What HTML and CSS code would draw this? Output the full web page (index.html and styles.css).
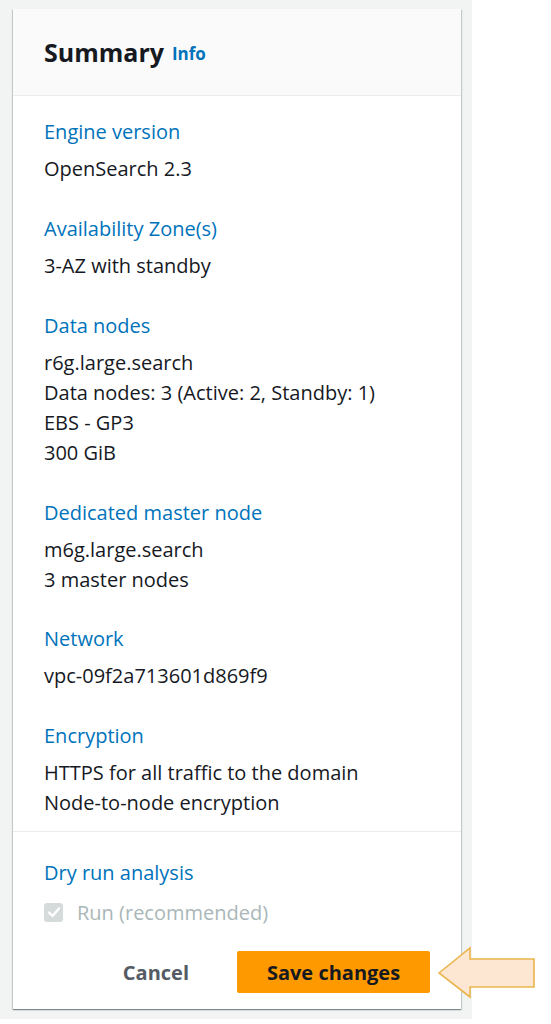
FILE: index.html
```html
<!DOCTYPE html>
<html lang="en">
<head>
<meta charset="utf-8">
<title>Summary</title>
<link rel="stylesheet" href="styles.css">
</head>
<body>
<div class="canvas">
  <div class="card">
    <div class="card-header">
      <h2 class="title">Summary</h2>
      <a class="info" href="#">Info</a>
    </div>
    <div class="card-body">
      <section class="item">
        <div class="label">Engine version</div>
        <div class="value">OpenSearch 2.3</div>
      </section>
      <section class="item">
        <div class="label">Availability Zone(s)</div>
        <div class="value">3-AZ with standby</div>
      </section>
      <section class="item">
        <div class="label">Data nodes</div>
        <div class="value">r6g.large.search<br>Data nodes: 3 (Active: 2, Standby: 1)<br>EBS - GP3<br>300 GiB</div>
      </section>
      <section class="item">
        <div class="label">Dedicated master node</div>
        <div class="value">m6g.large.search<br>3 master nodes</div>
      </section>
      <section class="item">
        <div class="label">Network</div>
        <div class="value">vpc-09f2a713601d869f9</div>
      </section>
      <section class="item">
        <div class="label">Encryption</div>
        <div class="value">HTTPS for all traffic to the domain<br>Node-to-node encryption</div>
      </section>
    </div>
    <div class="card-footer">
      <div class="label">Dry run analysis</div>
      <label class="check">
        <span class="box"><svg viewBox="0 0 18 18" width="18" height="18"><path d="M4 9.5 L7.5 13 L14 5.5" fill="none" stroke="#fff" stroke-width="2.4" stroke-linecap="round" stroke-linejoin="round"/></svg></span>
        <span class="check-text">Run (recommended)</span>
      </label>
      <div class="actions">
        <button class="btn-link">Cancel</button>
        <button class="btn-primary">Save changes</button>
      </div>
    </div>
    <svg class="arrow" width="100" height="54" viewBox="0 0 100 54">
      <polygon points="2,27 33,2 33,13 97,13 97,41 33,41 33,51" fill="#fde7d3" stroke="#eab54c" stroke-width="1.6" stroke-linejoin="miter"/>
    </svg>
  </div>
</div>
</body>
</html>
```
FILE: styles.css
```css
html, body {
  margin: 0;
  padding: 0;
  background: #ffffff;
}
body {
  font-family: "Open Sans", "Noto Sans", Arial, sans-serif;
  color: #16191f;
}
.canvas {
  width: 472px;
  height: 1019px;
  background: #f2f3f3;
  padding: 9px 0 0 13px;
  box-sizing: border-box;
}
.card {
  position: relative;
  width: 448px;
  background: #ffffff;
  box-shadow: 0 1px 1px 0 rgba(0, 28, 36, 0.3), 1px 1px 1px 0 rgba(0, 28, 36, 0.15), -1px 1px 1px 0 rgba(0, 28, 36, 0.15);
}
.card-header {
  height: 86px;
  background: #fafafa;
  border-bottom: 1px solid #eaeded;
  display: flex;
  align-items: center;
  gap: 8px;
  padding: 0 31px;
}
.title {
  margin: 0;
  font-size: 25px;
  font-weight: 700;
  line-height: 30px;
  color: #16191f;
}
.info {
  font-size: 17px;
  font-weight: 700;
  color: #0073bb;
  text-decoration: none;
  line-height: 30px;
  padding-top: 4px;
}
.card-body {
  padding: 21px 31px 13px;
  display: flex;
  flex-direction: column;
  gap: 30px;
  border-bottom: 1px solid #eaeded;
}
.item:nth-child(5) {
  margin-top: -1px;
}
.label {
  font-size: 20px;
  line-height: 30px;
  color: #0073bb;
}
.value {
  margin-top: 7px;
  font-size: 20px;
  line-height: 30px;
  color: #16191f;
}
.card-footer {
  padding: 26px 31px 16px;
}
.check {
  display: flex;
  align-items: center;
  gap: 14px;
  margin-top: 9px;
  height: 30px;
}
.box {
  width: 19px;
  height: 19px;
  border-radius: 3px;
  background: #d5dbdb;
  display: flex;
  align-items: center;
  justify-content: center;
}
.check-text {
  font-size: 20px;
  color: #aab7b8;
}
.actions {
  margin-top: 24px;
  display: flex;
  justify-content: flex-end;
  align-items: center;
  gap: 28px;
}
.btn-link {
  font-family: inherit;
  font-size: 20px;
  font-weight: 700;
  color: #545b64;
  background: none;
  border: none;
  padding: 0 20px;
  height: 42px;
}
.btn-primary {
  font-family: inherit;
  font-size: 20px;
  font-weight: 700;
  color: #16191f;
  background: #ff9900;
  border: none;
  border-radius: 2px;
  height: 42px;
  width: 193px;
}
.arrow {
  position: absolute;
  left: 424px;
  top: 937px;
}
```
